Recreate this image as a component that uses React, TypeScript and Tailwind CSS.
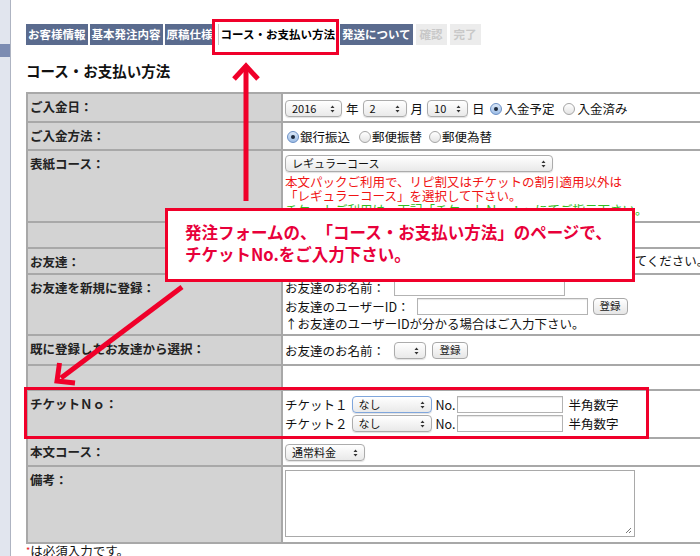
import React from "react";

const FONT = "font-['Noto_Sans_CJK_JP','Noto_Sans',sans-serif] [text-spacing-trim:space-all]";

function Arrows() {
  return (
    <svg
      className="absolute left-0 top-0 pointer-events-none"
      width={700}
      height={556}
      viewBox="0 0 700 556"
    >
      <g stroke="#f0002a" strokeWidth={5} fill="none" strokeLinecap="butt" strokeLinejoin="miter">
        <line x1={246} y1={201} x2={246} y2={68} />
        <polyline points="234,79 246,66 258,79" />
        <line x1={182} y1={287} x2={61} y2={378} />
        <polyline points="59.5,363 57,381 75,383" />
      </g>
    </svg>
  );
}

function UpDown() {
  return (
    <svg width="5" height="8" viewBox="0 0 5 8" className="shrink-0">
      <path d="M2.5 0.5 L4.5 3 L0.5 3 Z M2.5 7.5 L4.5 5 L0.5 5 Z" fill="#333" />
    </svg>
  );
}

function Sel({ children, className = "", focus = false }: { children?: React.ReactNode; className?: string; focus?: boolean }) {
  return (
    <div
      className={`flex items-center justify-between h-[17px] rounded-[4px] border bg-gradient-to-b from-white to-[#e9e9e9] pl-[6px] pr-[6px] text-[11px] leading-none text-[#111] shadow-[0_1px_1px_rgba(0,0,0,0.12)] ${
        focus ? "border-[#7fa6dc]" : "border-[#acacac]"
      } ${className}`}
    >
      <span>{children}</span>
      <UpDown />
    </div>
  );
}

function Radio({ checked = false, className = "" }: { checked?: boolean; className?: string }) {
  return (
    <span
      className={`flex items-center justify-center w-[12px] h-[12px] rounded-full border ${
        checked ? "border-[#6a8fc4] bg-gradient-to-b from-[#dbe8f8] to-[#9dbde6]" : "border-[#a5a5a5] bg-gradient-to-b from-white to-[#e4e4e4]"
      } ${className}`}
    >
      {checked && <span className="w-[4px] h-[4px] rounded-full bg-[#1d2a3d]" />}
    </span>
  );
}

function Btn({ className = "" }: { className?: string }) {
  return (
    <div
      className={`flex items-center justify-center h-[17px] rounded-[4px] border border-[#a8a8a8] bg-gradient-to-b from-white to-[#e6e6e6] text-[10.5px] leading-none text-[#222] ${className}`}
    >
      登録
    </div>
  );
}

function Input({ className = "" }: { className?: string }) {
  return <div className={`h-[17px] border border-[#b3b3b3] bg-white shadow-[inset_0_1px_1px_rgba(0,0,0,0.1)] ${className}`} />;
}

function Row({
  label,
  h,
  first = false,
  children,
}: {
  label?: string;
  h: string;
  first?: boolean;
  children?: React.ReactNode;
}) {
  return (
    <div className={`flex ${first ? "" : "border-t-2 border-[#a8a8a8]"} ${h}`}>
      <div className="w-[255px] shrink-0 bg-[#d3d3d3] border-r-2 border-[#a8a8a8] pl-[2px] pt-[4px] text-[12.5px] leading-[17px] font-bold text-[#222]">
        {label}
      </div>
      <div className="flex-1 bg-white pl-[2px] text-[12.5px] leading-[16px] text-[#111]">{children}</div>
    </div>
  );
}

export default function App() {
  const tabs = [
    { t: "お客様情報", s: "on" },
    { t: "基本発注内容", s: "on" },
    { t: "原稿仕様", s: "on" },
    { t: "コース・お支払い方法", s: "cur" },
    { t: "発送について", s: "on" },
    { t: "確認", s: "off" },
    { t: "完了", s: "off" },
  ];

  return (
    <div className={`relative w-[700px] h-[556px] overflow-hidden bg-white ${FONT}`}>
      <div className="flex h-full">
        {/* left frame strip */}
        <div className="w-[11px] shrink-0 bg-[#e1e5ee] border-r border-[#aeb4c2] flex flex-col">
          <div className="h-[44px]" />
          <div className="h-[13px] bg-[#7c8cb2]" />
        </div>

        <div className="pl-[15px] flex-1 min-w-0">
          {/* step tabs */}
          <div className="flex gap-[2px] h-[21px] mt-[24px]">
            {tabs.map((tab) =>
              tab.s === "cur" ? (
                <div
                  key={tab.t}
                  className="flex items-center mx-[1px] px-[2px] bg-white border-l border-[#c9c9c9] text-[11.5px] font-bold text-black whitespace-nowrap"
                >
                  {tab.t}
                </div>
              ) : tab.s === "on" ? (
                <div
                  key={tab.t}
                  className="flex items-center px-[2px] bg-[#5a6b8e] text-[11.5px] font-bold text-white whitespace-nowrap"
                >
                  {tab.t}
                </div>
              ) : (
                <div
                  key={tab.t}
                  className="flex items-center ml-[1px] px-[4px] bg-[#ececec] text-[11.5px] font-bold text-[#c8c8c8] whitespace-nowrap"
                >
                  {tab.t}
                </div>
              )
            )}
          </div>

          <h1 className="mt-[16px] text-[14.5px] leading-[20px] font-bold text-[#111]">コース・お支払い方法</h1>

          {/* form table */}
          <div className="mt-[11px] w-[760px] border-2 border-[#a8a8a8]">
            <Row label="ご入金日：" h="h-[27px]" first>
              <div className="flex items-center h-[17px] mt-[6px]">
                <Sel className="w-[57px]">2016</Sel>
                <span className="ml-[4px]">年</span>
                <Sel className="ml-[4px] w-[44px]">2</Sel>
                <span className="ml-[4px]">月</span>
                <Sel className="ml-[4px] w-[41px]">10</Sel>
                <span className="ml-[4px]">日</span>
                <Radio checked className="ml-[5px]" />
                <span className="ml-[3px]">入金予定</span>
                <Radio className="ml-[8px]" />
                <span className="ml-[3px]">入金済み</span>
              </div>
            </Row>
            <Row label="ご入金方法：" h="h-[28px]">
              <div className="flex items-center h-[16px] mt-[6px]">
                <Radio checked className="ml-[2px]" />
                <span className="ml-[1px]">銀行振込</span>
                <Radio className="ml-[9px]" />
                <span className="ml-[1px]">郵便振替</span>
                <Radio className="ml-[7px]" />
                <span className="ml-[1px]">郵便為替</span>
              </div>
            </Row>
            <Row label="表紙コース：" h="h-[72px]">
              <Sel className="mt-[4px] w-[268px] h-[16px]">レギュラーコース</Sel>
              <div className="mt-[3px] leading-[14px] whitespace-nowrap">
                <div className="text-[#f01414]">本文パックご利用で、リピ割又はチケットの割引適用以外は</div>
                <div className="text-[#f01414]">「レギュラーコース」を選択して下さい。</div>
                <div className="text-[#33bb22]">チケットご利用は、下記「チケットＮｏ：」にてご指示下さい。</div>
              </div>
            </Row>
            <Row h="h-[26px]" />
            <Row label="お友達：" h="h-[26px]">
              <div className="mt-[4px] whitespace-nowrap">紹介でご注文の場合は、お友達のお名前を入力もしくは選択してください。</div>
            </Row>
            <Row label="お友達を新規に登録：" h="h-[61px]">
              <div className="flex items-center h-[17px] mt-[4px]">
                <span>お友達のお名前：</span>
                <Input className="ml-[9px] w-[171px]" />
              </div>
              <div className="flex items-center h-[17px] mt-[2px]">
                <span>お友達のユーザーID：</span>
                <Input className="ml-[7px] w-[171px]" />
                <Btn className="ml-[5px] w-[35px]" />
              </div>
              <div className="mt-[1px] leading-[15px]">↑お友達のユーザーIDが分かる場合はご入力下さい。</div>
            </Row>
            <Row label="既に登録したお友達から選択：" h="h-[30px]">
              <div className="flex items-center h-[17px] mt-[6px]">
                <span>お友達のお名前：</span>
                <Sel className="ml-[9px] w-[32px]" />
                <Btn className="ml-[6px] w-[36px]" />
              </div>
            </Row>
            <Row h="h-[25px]" />
            <Row label="チケットＮｏ：" h="h-[48px]">
              <div className="flex items-center h-[19px] mt-[4px]">
                <span>チケット１</span>
                <Sel focus className="ml-[4px] w-[80px]">なし</Sel>
                <span className="ml-[4px]">No.</span>
                <Input className="ml-[2px] w-[106px]" />
                <span className="ml-[5px]">半角数字</span>
              </div>
              <div className="flex items-center h-[19px]">
                <span>チケット２</span>
                <Sel className="ml-[4px] w-[80px]">なし</Sel>
                <span className="ml-[4px]">No.</span>
                <Input className="ml-[2px] w-[106px]" />
                <span className="ml-[5px]">半角数字</span>
              </div>
            </Row>
            <Row label="本文コース：" h="h-[28px]">
              <Sel className="mt-[5px] w-[80px]">通常料金</Sel>
            </Row>
            <Row label="備考：" h="h-[77px]">
              <div className="relative mt-[3px] w-[350px] h-[67px] border border-[#a9a9a9] bg-white">
                <svg width="7" height="7" viewBox="0 0 7 7" className="absolute right-[2px] bottom-[2px]">
                  <path d="M1 6 L6 1 M4 6 L6 4" stroke="#777" strokeWidth="1" />
                </svg>
              </div>
            </Row>
          </div>

          <div className="text-[12.5px] leading-[13px] text-[#111]">
            <span className="text-[#e8141e] text-[9px] align-top">*</span>は必須入力です。
          </div>
        </div>
      </div>

      {/* annotations */}
      <div className="absolute left-[212px] top-[19px] w-[127px] h-[36px] border-[3px] border-[#f0002a]" />
      <div className="absolute left-[24px] top-[387px] w-[625px] h-[52px] border-[3px] border-[#f0002a]" />
      <Arrows />
      <div className="absolute left-[165px] top-[208px] w-[470px] h-[74px] border-[3px] border-[#f0002a] bg-white pl-[17px] pt-[10px] text-[16.5px] leading-[22px] font-bold text-[#e8003a]">
        <div className="whitespace-nowrap">発注フォームの、「コース・お支払い方法」のページで、</div>
        <div className="whitespace-nowrap">チケットNo.をご入力下さい。</div>
      </div>
    </div>
  );
}
